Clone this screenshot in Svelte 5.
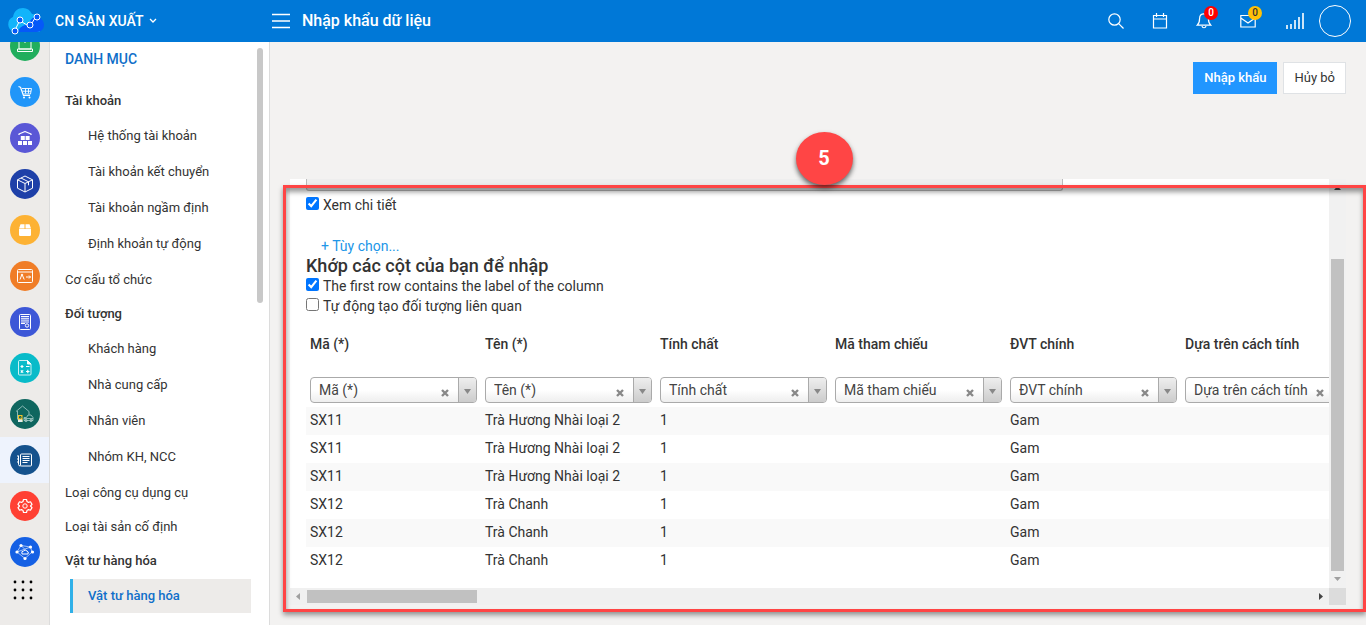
<script>
  let showDetail = true;
  let firstRowLabel = true;
  let autoCreate = false;

  const apps = [
    { id: "laptop", color: "#21ae5d", label: "Máy tính" },
    { id: "cart", color: "#2196f9", label: "Bán hàng" },
    { id: "warehouse", color: "#5a57d6", label: "Kho" },
    { id: "box", color: "#1e40a8", label: "Sản phẩm" },
    { id: "package", color: "#fdb234", label: "Đóng gói" },
    { id: "card", color: "#f07d27", label: "Nhân sự" },
    { id: "invoice", color: "#3d57d7", label: "Hóa đơn" },
    { id: "tax", color: "#09bbc9", label: "Thuế" },
    { id: "asset", color: "#0f665f", label: "Tài sản" },
    { id: "list", color: "#15528d", label: "Danh mục", active: true },
    { id: "gear", color: "#ff4033", label: "Thiết lập" },
    { id: "network", color: "#1560e4", label: "Kết nối" },
  ];

  const menu = [
    {
      name: "Tài khoản",
      children: [
        "Hệ thống tài khoản",
        "Tài khoản kết chuyển",
        "Tài khoản ngầm định",
        "Định khoản tự động",
      ],
    },
    { name: "Cơ cấu tổ chức" },
    {
      name: "Đối tượng",
      children: ["Khách hàng", "Nhà cung cấp", "Nhân viên", "Nhóm KH, NCC"],
    },
    { name: "Loại công cụ dụng cụ" },
    { name: "Loại tài sản cố định" },
    { name: "Vật tư hàng hóa", children: ["Vật tư hàng hóa"] },
  ];
  const current = "Vật tư hàng hóa";

  const columns = [
    "Mã (*)",
    "Tên (*)",
    "Tính chất",
    "Mã tham chiếu",
    "ĐVT chính",
    "Dựa trên cách tính",
  ];
  let mapping = [...columns];

  const rows = [
    ["SX11", "Trà Hương Nhài loại 2", "1", "", "Gam", ""],
    ["SX11", "Trà Hương Nhài loại 2", "1", "", "Gam", ""],
    ["SX11", "Trà Hương Nhài loại 2", "1", "", "Gam", ""],
    ["SX12", "Trà Chanh", "1", "", "Gam", ""],
    ["SX12", "Trà Chanh", "1", "", "Gam", ""],
    ["SX12", "Trà Chanh", "1", "", "Gam", ""],
  ];

  function clearColumn(i) {
    mapping[i] = "";
  }
</script>

<div class="app">
  <header>
    <div class="brand">
      <svg width="38" height="28" viewBox="1 0 38 28">
        <path
          d="M8 25a8 8 0 0 1-1-15C8 4 12 1 17 1c4 0 7 2 9 6 5 0 8 3 8 8v10z"
          fill="#12b4fb"
        />
        <path
          d="M12 25c1-5 5-6 9-8 3-2 4-6 8-7 5 0 9 3 9 8 0 4-3 7-7 7z"
          fill="#0559f8"
        />
        <g fill="none" stroke="#fff" stroke-width="1">
          <path d="M10 21l3-6M16 15l5 3M26 16l3-5" />
          <circle cx="9" cy="24" r="3" fill="#0559f8" />
          <circle cx="14" cy="13" r="3" fill="#0559f8" />
          <circle cx="24" cy="18" r="3" fill="#0559f8" />
          <circle cx="31" cy="10" r="3" fill="#0559f8" />
        </g>
      </svg>
      <button class="branch">
        CN SẢN XUẤT
        <svg width="8" height="6" viewBox="0 0 8 6">
          <path d="M1 1l3 3 3-3" fill="none" stroke="#fff" stroke-width="1.3" />
        </svg>
      </button>
    </div>
    <button class="burger" aria-label="Menu">
      <svg width="18" height="16" viewBox="0 0 18 16">
        <path d="M0 1.5h18M0 8h18M0 14.5h18" stroke="#fff" stroke-width="1.4" />
      </svg>
    </button>
    <h1>Nhập khẩu dữ liệu</h1>
    <nav class="tools">
      <button aria-label="Tìm kiếm">
        <svg width="16" height="16" viewBox="0 0 16 16">
          <circle cx="6.5" cy="6.5" r="5.7" />
          <path d="M10.7 10.7l4.8 4.8" />
        </svg>
      </button>
      <button aria-label="Lịch">
        <svg width="16" height="16" viewBox="0 0 16 16">
          <path d="M1.5 2.5h13v12.5h-13zM1.5 6h13M4.5 0v4M11.5 0v4" />
        </svg>
      </button>
      <button aria-label="Thông báo">
        <svg width="16" height="16" viewBox="0 0 16 16">
          <path
            d="M8 .8C5 .8 3.6 3 3.6 5.5c0 4-1 5.500-2.400 6.700h13.600c-1.400-1.200-2.400-2.700-2.400-6.700C12.400 3 11 .8 8 .8zM6 13c.4 2.300 3.600 2.300 4 0"
          />
        </svg>
        <span class="badge red">0</span>
      </button>
      <button aria-label="Thư">
        <svg width="16" height="16" viewBox="0 0 16 16">
          <path d="M.8 2.500h14.400v11.500H.8zM.8 5l7.200 5 7.200-5" />
        </svg>
        <span class="badge yellow">0</span>
      </button>
      <button class="signal" aria-label="Kết nối">
        <svg width="18" height="16" viewBox="0 0 18 16">
          <path
            d="M1 16v-4M5 16v-5M9 16V7M13 16V4M17 16V0"
            stroke-width="1.6"
          />
        </svg>
      </button>
      <button class="avatar" aria-label="Tài khoản"></button>
    </nav>
  </header>

  <div class="body">
    <nav class="rail">
      <div class="railList">
        {#each apps as app}
          <a href="#{app.id}" class:active={app.active} aria-label={app.label}>
            <svg width="30" height="30" viewBox="0 0 30 30">
              <circle cx="15" cy="15" r="15" fill={app.color} />
              <g
                fill="none"
                stroke="#fff"
                stroke-width="1"
                stroke-linejoin="round"
              >
                {#if app.id === "laptop"}
                  <path d="M9 8h12v10H9zM7.500 18h15v2.500h-15zM14 11h2" />
                {:else if app.id === "cart"}
                  <path d="M8.500 9.500l2 .8 3 8.200h6.500" stroke-width="1.200" />
                  <path
                    d="M12 11.500h9.500l-1 5.500h-7M12.500 14.200h8.500M15.500 11.500v5M18.500 11.500v5"
                    stroke-width=".9"
                  />
                  <circle cx="14" cy="20.500" r="1" fill="#fff" stroke="none" />
                  <circle cx="19.500" cy="20.500" r="1" fill="#fff" stroke="none" />
                {:else if app.id === "warehouse"}
                  <path d="M9 12v-1l6-2.500 6 2.500v1" stroke-width="1.300" />
                  <path
                    d="M10.800 13h4v4h-4zM15.600 13h4v4h-4zM8 18h4v4H8zM13 18h4v4h-4zM18 18h4v4h-4z"
                    fill="#fff"
                    stroke="none"
                  />
                {:else if app.id === "box"}
                  <path
                    d="M15 7l7.500 3.800v8.400L15 23l-7.500-3.800v-8.400zM7.500 10.800L15 14.500l7.500-3.700M15 14.500V23M11 9l7.500 3.800v3.500"
                  />
                {:else if app.id === "package"}
                  <path
                    d="M9 14h12v5.800q0 1.200-1.200 1.200h-9.600Q9 21 9 19.800zM10.500 9.200h4v4.200H9zM15.500 9.200h4l1.500 4.200h-5.500z"
                    fill="#fff"
                    stroke="none"
                  />
                {:else if app.id === "card"}
                  <rect x="7.500" y="8.500" width="15" height="13" rx="1" />
                  <path d="M7.500 11h15M11.500 14.500l-1.500 4M12.500 14.500l1.700 4" />
                  <circle cx="12" cy="14" r=".8" fill="#fff" />
                  <path d="M16 16h4.500M19 14.500l1.500 1.500-1.500 1.500" />
                {:else if app.id === "invoice"}
                  <rect x="9.500" y="7.500" width="11" height="15" rx="1" />
                  <path d="M11 9.500h8M11 11.300h8M11 13.100h8M11 15h8M11 16.500h4" />
                  <circle cx="17" cy="18.500" r="1.700" />
                {:else if app.id === "tax"}
                  <path
                    d="M9.500 7.500h8l3.500 3.500v10q0 1-1 1H9.500q-1 0-1-1v-12.500q0-1 1-1z"
                    stroke-width=".8"
                  />
                  <path d="M17.500 7.500V11H21z" fill="#fff" />
                  <path
                    d="M10.500 13.500h3M12 12v3M16 13.500h3.500M10.800 17.300l2.400 2.400M13.200 17.300l-2.400 2.400M16 18.500h3.500M17.800 16.800v3.400"
                    stroke-width="1.200"
                  />
                {:else if app.id === "asset"}
                  <g stroke="#a9ceca" stroke-width=".8">
                    <path d="M6 12.500L12.500 7l6.500 5.500v3M7.500 12v8.500" />
                    <path d="M14 18.500h2.500l1.500-2.500h3l2 2.500v3h-9zM14 19.500h9" />
                    <circle cx="16" cy="21.500" r="1.200" />
                    <circle cx="21" cy="21.500" r="1.200" />
                  </g>
                  <path d="M8 16h4.500v7H8z" fill="#f3c126" stroke="none" />
                  <path d="M9.500 17.500h1.500v1.500H9.500z" stroke="#0f665f" />
                  <path d="M8 20.500h4.500V23H8z" fill="#e4eeee" stroke="none" />
                {:else if app.id === "list"}
                  <rect x="10.500" y="9" width="11" height="12" rx="1" />
                  <path
                    d="M8.500 11v8.500q0 1.500 2 1.500M7 11h2M7 14h2M7 17h2M12.500 11.500h7M12.500 13.500h7M12.500 15.500h7M12.500 17.500h5"
                  />
                {:else if app.id === "gear"}
                  <circle cx="15" cy="15" r="2.200" />
                  <path
                    d="M13.500 8.500h3l.5 2 1.500.9 2-.6 1.500 2.600-1.500 1.600 1.500 1.600-1.500 2.600-2-.6-1.500.9-.5 2h-3l-.5-2-1.500-.9-2 .6L8 16.600 9.500 15 8 13.400l1.500-2.600 2 .6 1.500-.9z"
                    stroke-width="1.200"
                  />
                {:else}
                  <path
                    d="M11 8.500l9.500 1.500 1.500 5-7 6.500-8-6.500zM7 15l13.500-5M11 8.500l4 4"
                    stroke-width=".6"
                  />
                  <path d="M12 17q-1-3 1.500-3 1.500-2 3.500 0 2 .5 1 3z" fill="#1560e4" />
                  <g fill="#fff" stroke="none">
                    <circle cx="11" cy="8.500" r="1.600" />
                    <circle cx="20.500" cy="10" r="1.600" />
                    <circle cx="22.500" cy="15" r="1.600" />
                    <circle cx="15" cy="21.500" r="1.600" />
                    <circle cx="7" cy="15" r="1.600" />
                  </g>
                {/if}
              </g>
            </svg>
          </a>
        {/each}
        <button class="more" aria-label="Tất cả ứng dụng">
          <svg width="20" height="20" viewBox="0 0 20 20">
            {#each [2, 10, 18] as y}
              {#each [2, 10, 18] as x}
                <circle cx={x} cy={y} r="1.400" fill="#000" />
              {/each}
            {/each}
          </svg>
        </button>
      </div>
    </nav>

    <aside>
      <div class="menuWrap">
        <h2>DANH MỤC</h2>
        <ul class="menu">
          {#each menu as group}
            <li>
              {#if group.children}
                <span class="label bold">{group.name}</span>
                <ul class="sub">
                  {#each group.children as child}
                    <li>
                      <a href="#menu" class:selected={child === current}>{child}</a>
                    </li>
                  {/each}
                </ul>
              {:else}
                <a class="label" href="#menu">{group.name}</a>
              {/if}
            </li>
          {/each}
        </ul>
      </div>
      <div class="menuBar"></div>
    </aside>

    <main>
      <div class="actions">
        <button class="primary">Nhập khẩu</button>
        <button class="plain">Hủy bỏ</button>
      </div>

      <section class="panel">
        <div class="content">
          <div class="filebox"></div>
          <label class="check">
            <input type="checkbox" bind:checked={showDetail} />
            Xem chi tiết
          </label>
          <a class="options" href="#options">+ Tùy chọn...</a>
          <h3>Khớp các cột của bạn để nhập</h3>
          <label class="check">
            <input type="checkbox" bind:checked={firstRowLabel} />
            The first row contains the label of the column
          </label>
          <label class="check">
            <input type="checkbox" bind:checked={autoCreate} />
            Tự động tạo đối tượng liên quan
          </label>

          <table>
            <thead>
              <tr>
                {#each columns as col}
                  <th>{col}</th>
                {/each}
              </tr>
              <tr class="combos">
                {#each columns as col, i}
                  <td>
                    <div class="combo">
                      <select bind:value={mapping[i]} aria-label={col}>
                        <option value=""></option>
                        {#each columns as name}
                          <option value={name}>{name}</option>
                        {/each}
                      </select>
                      <button
                        class="clear"
                        aria-label="Xóa"
                        on:click={() => clearColumn(i)}
                      >
                        <svg width="8" height="8" viewBox="0 0 8 8">
                          <path
                            d="M1 1l6 6M7 1L1 7"
                            stroke="#888"
                            stroke-width="2.400"
                          />
                        </svg>
                      </button>
                      <span class="arrow">
                        <svg width="7" height="5" viewBox="0 0 7 5">
                          <path d="M0 0h7L3.500 5z" fill="#888" />
                        </svg>
                      </span>
                    </div>
                  </td>
                {/each}
              </tr>
            </thead>
            <tbody>
              {#each rows as row}
                <tr>
                  {#each row as cell}
                    <td>{cell}</td>
                  {/each}
                </tr>
              {/each}
            </tbody>
          </table>
        </div>

        <div class="vbar">
          <svg width="7" height="4" viewBox="0 0 7 4">
            <path d="M0 4L3.500 0 7 4z" fill="#444" />
          </svg>
          <div class="thumb"></div>
          <svg width="7" height="4" viewBox="0 0 7 4">
            <path d="M0 0h7L3.500 4z" fill="#a0a0a0" />
          </svg>
        </div>
        <div class="hbar">
          <svg width="4" height="7" viewBox="0 0 4 7">
            <path d="M4 0v7L0 3.500z" fill="#a0a0a0" />
          </svg>
          <div class="thumb"></div>
          <svg width="4" height="7" viewBox="0 0 4 7">
            <path d="M0 0v7l4-3.500z" fill="#444" />
          </svg>
        </div>
        <div class="corner"></div>

        <div class="frame"><span class="step">5</span></div>
      </section>
    </main>
  </div>
</div>

<style>
  :global(body) {
    overflow: hidden;
  }
  .app {
    display: flex;
    flex-direction: column;
    height: 100vh;
    font-family: Roboto, "Noto Sans", sans-serif;
    font-size: 14px;
    color: #333;
    background: #f3f2f1;
  }
  button {
    font: inherit;
    color: inherit;
    border: none;
    background: none;
    padding: 0;
    cursor: pointer;
  }
  a {
    color: inherit;
    text-decoration: none;
  }
  ul {
    list-style: none;
    margin: 0;
    padding: 0;
  }
  * {
    box-sizing: border-box;
  }

  header {
    display: flex;
    align-items: center;
    flex: none;
    height: 42px;
    padding: 0 15px 0 7px;
    background: #0078d7;
    color: #fff;
  }
  .brand {
    display: flex;
    align-items: center;
    gap: 10px;
    width: 265px;
  }
  .branch {
    display: flex;
    align-items: center;
    gap: 5px;
    font-weight: 500;
  }
  .burger {
    display: flex;
    margin-right: 12px;
  }
  h1 {
    margin: 0;
    padding-bottom: 2px;
    font-size: 16px;
    font-weight: 500;
  }
  .tools {
    display: flex;
    align-items: center;
    margin-left: auto;
  }
  .tools button {
    position: relative;
    display: flex;
    align-items: center;
    justify-content: center;
    width: 44px;
    height: 40px;
  }
  .tools svg {
    fill: none;
    stroke: #fff;
    stroke-width: 1.2;
  }
  .tools .signal {
    width: 49px;
  }
  .tools .avatar {
    width: 32px;
    height: 32px;
    border: 1px solid #fff;
    border-radius: 50%;
  }
  .badge {
    position: absolute;
    top: 5px;
    right: 8px;
    width: 14px;
    height: 14px;
    border-radius: 50%;
    font-size: 10px;
    line-height: 14px;
    font-weight: 500;
    text-align: center;
  }
  .red {
    background: #f00;
  }
  .yellow {
    background: #ffc107;
    color: #333;
  }

  .body {
    display: flex;
    flex: 1;
    min-height: 0;
  }
  .rail {
    flex: none;
    width: 50px;
    overflow: hidden;
    background: #edebe9;
    border-right: 1px solid #dcdcdc;
  }
  /* list starts part way scrolled */
  .railList {
    margin-top: -19px;
  }
  .rail a {
    display: flex;
    align-items: center;
    padding-left: 10px;
    height: 46px;
  }
  .rail .active {
    background: #eef3fd;
  }
  .more {
    display: flex;
    margin: 5px 13px;
  }

  aside {
    display: flex;
    flex: none;
    justify-content: space-between;
    width: 220px;
    overflow: hidden;
    background: #fff;
    border-right: 1px solid #dcdcdc;
    font-size: 13px;
  }
  .menuWrap {
    flex: 1;
    padding: 6px 6px 0 15px;
  }
  h2 {
    margin: 0 0 14px;
    font-size: 14px;
    line-height: 22px;
    font-weight: 500;
    color: #106fc9;
  }
  .label {
    display: block;
    line-height: 34px;
  }
  .bold {
    font-weight: 500;
  }
  .sub {
    padding: 0 0 1px 5px;
  }
  .sub li {
    padding: 1px 0;
  }
  .sub a {
    display: block;
    padding-left: 15px;
    border-left: 3px solid transparent;
    line-height: 34px;
  }
  .sub .selected {
    background: #edebe9;
    border-color: #30b0e8;
    font-weight: 500;
    color: #106fc9;
  }
  .menuBar {
    width: 6px;
    height: 255px;
    margin: 6px 6px 0 0;
    border-radius: 3px;
    background: #c8c8c8;
  }

  main {
    display: flex;
    flex-direction: column;
    flex: 1;
    min-width: 0;
    padding: 20px;
  }
  .actions {
    display: flex;
    justify-content: flex-end;
    gap: 6px;
    margin-bottom: 85px;
    font-size: 13px;
  }
  .actions button {
    height: 32px;
    padding: 0 11px 2px;
  }
  .actions .primary {
    background: #2196ff;
    color: #fff;
    font-weight: 500;
  }
  .actions .plain {
    padding: 0 10px 2px;
    background: #fff;
    border: 1px solid #dfe2e5;
  }

  .panel {
    position: relative;
    display: grid;
    grid-template-columns: minmax(0, 1fr) 17px;
    grid-template-rows: minmax(0, 1fr) 17px;
    flex: 1;
    min-height: 0;
  }
  .content {
    overflow: hidden;
    padding-left: 16px;
    background: #fff;
  }
  .filebox {
    width: 74%;
    height: 12px;
    margin-bottom: 4px;
    background: #eee;
    border: 1px solid #bbb;
    border-top: none;
    border-radius: 0 0 3px 3px;
  }
  .check {
    display: flex;
    align-items: center;
    gap: 4px;
    line-height: 20px;
  }
  .check input {
    width: 13px;
    height: 13px;
    margin: 0 0 3px;
    accent-color: #0075ff;
  }
  .options {
    display: block;
    margin-top: 21px;
    padding-left: 15px;
    line-height: 20px;
    color: #2196e8;
  }
  h3 {
    margin: 0;
    font-size: 18px;
    line-height: 20px;
    font-weight: 500;
  }

  table {
    width: 1050px;
    margin-top: 14px;
    table-layout: fixed;
    border-collapse: collapse;
  }
  th,
  td {
    height: 28px;
    padding: 0 4px 2px;
    text-align: left;
    font-weight: 400;
    white-space: nowrap;
  }
  th {
    padding-bottom: 0;
    font-weight: 500;
  }
  .combos td {
    height: 49px;
    padding: 16px 4px 2px;
  }
  tbody tr:nth-child(odd) {
    background: #f9f9f9;
  }
  .combo {
    display: flex;
    align-items: stretch;
    width: 167px;
    height: 26px;
    overflow: hidden;
    border: 1px solid #aaa;
    border-radius: 4px;
    background: linear-gradient(#fff 50%, #eee);
  }
  select {
    flex: 1;
    min-width: 0;
    padding: 0 0 0 8px;
    appearance: none;
    border: none;
    background: none;
    font: inherit;
    color: #444;
  }
  .clear {
    display: flex;
    align-items: flex-end;
    padding: 0 9px 5px 4px;
  }
  .arrow {
    display: flex;
    align-items: center;
    justify-content: center;
    width: 18px;
    padding-top: 3px;
    border-left: 1px solid #aaa;
    background: linear-gradient(#eee, #ccc);
  }

  .vbar {
    display: flex;
    flex-direction: column;
    align-items: center;
    padding: 7px 0;
    background: #f1f1f1;
  }
  .vbar .thumb {
    flex: 1;
    width: 13px;
    margin: 69px 0 6px;
    background: #c1c1c1;
  }
  .hbar {
    display: flex;
    align-items: center;
    gap: 7px;
    padding: 0 6px;
    background: #f0f0f0;
  }
  .hbar .thumb {
    width: 170px;
    height: 13px;
    margin-right: auto;
    background: #c1c1c1;
  }
  .corner {
    background: #dcdcdc;
  }

  .frame {
    position: absolute;
    inset: 6px -20px -7px -7px;
    border: 3px solid #ff4545;
    box-shadow:
      0 3px 5px rgba(0, 0, 0, 0.4),
      inset 0 4px 5px rgba(0, 0, 0, 0.4);
    pointer-events: none;
  }
  .step {
    position: absolute;
    left: 50%;
    bottom: 100%;
    display: flex;
    align-items: center;
    justify-content: center;
    width: 57px;
    height: 53px;
    margin: 0 0 3px -29px;
    padding-bottom: 2px;
    border-radius: 50%;
    background: #ff4545;
    box-shadow: 0 3px 5px rgba(0, 0, 0, 0.6);
    color: #fff;
    font-size: 20px;
    font-weight: 700;
  }
</style>
